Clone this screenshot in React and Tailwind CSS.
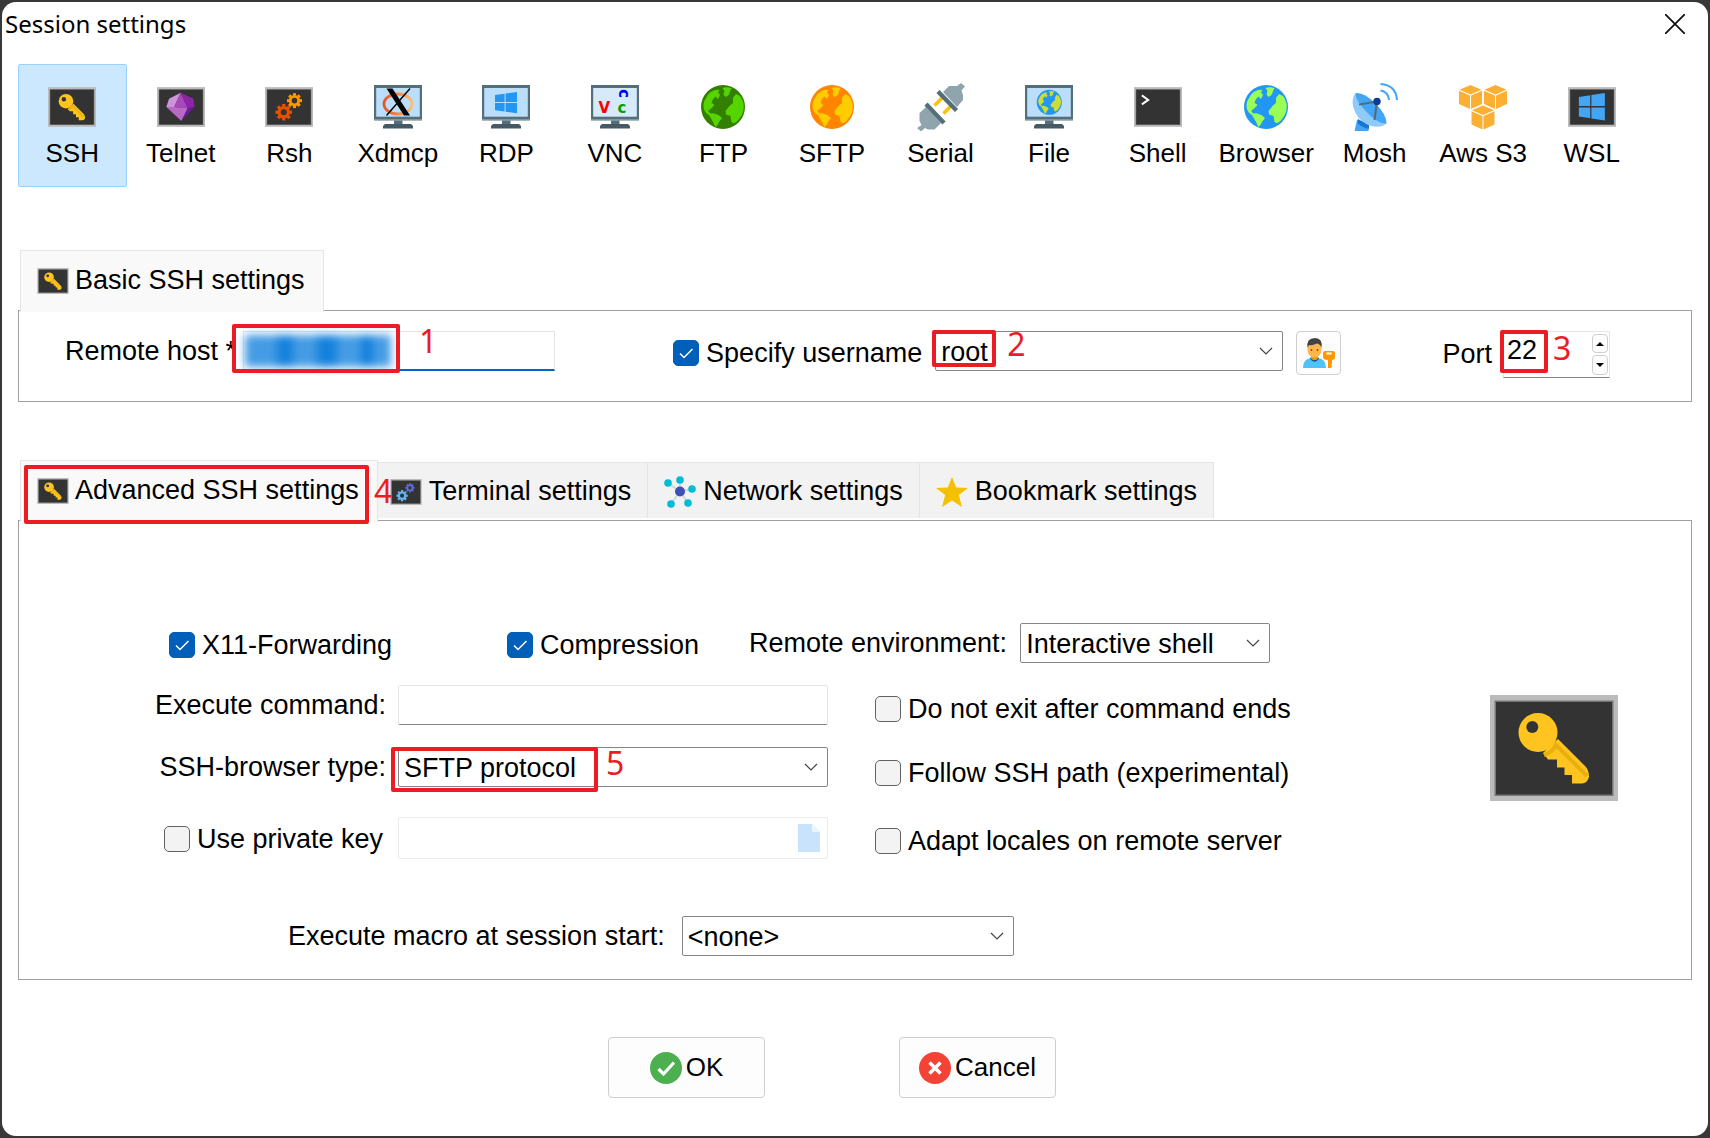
import { useState } from 'react'

function Tile({ className = 'w-12 h-10', children }) {
  return (
    <svg viewBox="0 0 128 106" className={className} aria-hidden="true">
      <rect width="128" height="106" fill="#bbbbbb" />
      <rect x="4.500" y="5.500" width="119" height="95.500" fill="#777" />
      <rect x="6" y="7" width="116" height="92.500" fill="#333" />
      {children}
    </svg>
  )
}

function KeyTile({ className }) {
  return (
    <Tile className={className}>
      <path d="M68 44L96 72Q99 76 99 82Q97 88.500 92 88.500H82V80H74.500V72.500H67V64.500H58L53 58Z" fill="#ffc41f" />
      <path d="M54 60Q63 57 66 50L97 81" fill="none" stroke="#e8b00c" strokeWidth="4" />
      <circle cx="48" cy="37.500" r="19.500" fill="#ffc41f" />
      <circle cx="42.300" cy="32" r="6" fill="#333" />
    </Tile>
  )
}

function Gear({ cx, cy, r, color }) {
  return (
    <g transform={`translate(${cx} ${cy})`} stroke={color} fill="none">
      <circle r={r * 0.56} strokeWidth={r * 0.38} />
      {[0, 45, 90, 135, 180, 225, 270, 315].map((a) => (
        <path key={a} d={`M0 ${-r * 0.66}V${-r}`} strokeWidth={r * 0.4} transform={`rotate(${a})`} />
      ))}
    </g>
  )
}

function TelnetIcon() {
  return (
    <Tile>
      <path d="M63 15L32 31L25 53L46 53Z" fill="#ce93d8" />
      <path d="M63 15L46 53L82 56Z" fill="#ab47bc" />
      <path d="M63 15L97 31L100 53L82 56Z" fill="#8e24aa" />
      <path d="M25 53H46L82 56L65 90Z" fill="#ba68c8" />
      <path d="M82 56L100 53L65 90Z" fill="#6a1b9a" />
    </Tile>
  )
}

function RshIcon() {
  return (
    <Tile>
      <Gear cx={78.6} cy={36} r={20} color="#ff9800" />
      <Gear cx={50} cy={67} r={22} color="#e65100" />
    </Tile>
  )
}

function WindowsLogo({ color, transform }) {
  return (
    <path
      transform={transform}
      fill={color}
      d="M0 2.500L9.600 1.200V9.600H0ZM10.600 1L22 -.5V9.600H10.600ZM0 10.600H9.600V19L0 17.700ZM10.600 10.600H22V20.700L10.600 19.200Z"
    />
  )
}

function Monitor({ screen = '#bbdefb', children }) {
  return (
    <svg viewBox="0 0 48 48" className="w-12 h-12" aria-hidden="true">
      <rect y="2" width="48" height="35.500" fill="#546e7a" />
      <rect y="36.500" width="48" height="1" fill="#b0bec5" />
      <rect x="2.200" y="5" width="43.600" height="28.700" fill={screen} />
      <rect x="20" y="37.500" width="8.500" height="4" fill="#546e7a" />
      <path d="M11 41H37L39 43V45.500H9V43Z" fill="#455a64" />
      {children}
    </svg>
  )
}

function XdmcpIcon() {
  return (
    <Monitor>
      <defs>
        <linearGradient id="xring">
          <stop offset="0" stopColor="#e95420" />
          <stop offset="1" stopColor="#fdbf6f" />
        </linearGradient>
      </defs>
      <ellipse cx="24" cy="21" rx="14" ry="10" fill="none" stroke="url(#xring)" strokeWidth="2.800" />
      <path d="M12.500 5.500H18.500L36 32.500H30Z" fill="#000" />
      <path d="M36 5.500L12.500 32.500" stroke="#000" strokeWidth="1.400" />
    </Monitor>
  )
}

function VncIcon() {
  return (
    <Monitor screen="#d6eafc">
      <g fontFamily="'DejaVu Sans', sans-serif" fontWeight="700" fontSize="15">
        <text x="7.500" y="30" fill="#f00">V</text>
        <text x="26.500" y="30" fill="#00a000">c</text>
        <text transform="translate(27.500 6) rotate(90)" fill="#00f">c</text>
      </g>
    </Monitor>
  )
}

function GlobeShape({ sea, land, transform }) {
  return (
    <g transform={transform}>
      <circle cx="24" cy="24" r="22" fill={sea} />
      <g fill={land}>
        <path d="M23.500 5Q28 3.500 32.500 5.300L30.700 8.700Q31 12 26.400 14L24.500 11.500L25.500 8Z" />
        <path d="M4.500 23.700Q4.500 18 7 15.300Q9 10 14.400 7.700Q17.500 6 20.500 7L19 9.300L21 12L19 16L16.500 13.500L14 16L12.500 19.700L15.500 22L12.500 25.300L9.300 27.700Q10 30 12 30.500L14.400 30.300L19.800 32.300L23 35L19.800 39.300Q19 43 16.200 44L14.700 40.300L12.500 36.300L10 32Q5.500 30 4.500 23.700Z" />
        <path d="M37 11L41 13Q45 19 44.700 23.700Q44.500 30 41.600 33.700Q39 38.500 35 40.300L32.500 39L31.500 33L27 31.500L26.500 28L30.500 23L34 20L34 15Z" />
      </g>
    </g>
  )
}

function GlobeIcon({ sea, land }) {
  return (
    <svg viewBox="0 0 48 48" className="w-12 h-12" aria-hidden="true">
      <GlobeShape sea={sea} land={land} />
    </svg>
  )
}

function SerialIcon() {
  return (
    <svg viewBox="0 0 48 48" className="w-12 h-12" aria-hidden="true">
      <path d="M25.500 14.500L17.500 22.500M33.500 23.500L26.500 30.500" stroke="#ffc107" strokeWidth="3.600" />
      <path d="M26 9L32 3H40L44 0L48 3.500L44.500 7.500L46 12V17L40 24Z" fill="#90a4ae" />
      <path d="M21 8.500L39.500 27.500" stroke="#546e7a" strokeWidth="4.400" />
      <path d="M9 24L2.500 30V38L4.500 42L0 45L4 48.500L8 45L11 46.500H17.500L24 40Z" fill="#90a4ae" />
      <path d="M9 21L27 40" stroke="#546e7a" strokeWidth="4.400" />
    </svg>
  )
}

function MoshIcon() {
  return (
    <svg viewBox="0 0 48 48" className="w-12 h-12" aria-hidden="true">
      <path d="M6 37L18 40L17.500 48H3.500Z" fill="#42a5f5" />
      <path d="M7 36L18 42V46Q10 44 6.500 40Z" fill="#1976d2" />
      <path d="M4.500 10Q0 16 2.500 25Q6 36 16 41.500Q28 46.500 35.500 40.500Z" fill="#90caf9" />
      <path d="M4.500 10Q13 9 24 20Q36 32 35.500 40.500Q27 41 15.500 29Q4 17 4.500 10Z" fill="#42a5f5" />
      <path d="M8 21.500L26 18.500L23.500 37" fill="none" stroke="#546e7a" strokeWidth="2.200" />
      <circle cx="26" cy="18.500" r="3.700" fill="#0d3c91" />
      <path d="M29.500 7.500Q37 8.500 38 17M29.500 1Q45 2 46 17" fill="none" stroke="#42a5f5" strokeWidth="2" />
    </svg>
  )
}

function AwsIcon() {
  const cubes = [[0, 2], [25, 2], [12.5, 22.5]]
  return (
    <svg viewBox="0 0 48 48" className="w-12 h-12" aria-hidden="true">
      {cubes.map(([x, y]) => (
        <g key={`${x}-${y}`} transform={`translate(${x} ${y})`} fill="#fbb034">
          <path d="M11.500 0L22.500 4.700L11.500 9.400L.5 4.700Z" />
          <path d="M0 5.800L11 10.400V24L0 19Z" />
          <path d="M23 5.800L12 10.400V24L23 19Z" />
        </g>
      ))}
    </svg>
  )
}

function UserKeyIcon() {
  return (
    <svg viewBox="0 0 32 32" className="w-8 h-8" aria-hidden="true">
      <path d="M0 31Q0 22 8 21H15Q23 22 23 31Z" fill="#4fc3f7" />
      <path d="M7 21.500Q11.500 28 16 21.500L15 20H8Z" fill="#01579b" />
      <path d="M8 17H15V21.500Q11.500 25 8 21.500Z" fill="#ff9800" />
      <ellipse cx="11.500" cy="12.500" rx="7" ry="8" fill="#ffb74d" />
      <path d="M4.500 11Q3 1 12 1Q20 1 18.500 11Q17.500 7 14 6.500Q9 9 6 8Z" fill="#424242" />
      <circle cx="8.500" cy="13" r=".9" fill="#784719" />
      <circle cx="14.500" cy="13" r=".9" fill="#784719" />
      <path d="M22 14H30Q32 14 32 16V20Q32 23 29 23V27L28 28L29 29V30L27.500 31H25V23Q20 23 20 20V16Q20 14 22 14Z" fill="#ff9800" />
      <path d="M23.500 16.500H28.500" stroke="#fff" strokeWidth="2" />
    </svg>
  )
}

function NetworkIcon() {
  return (
    <svg viewBox="0 0 32 32" className="w-8 h-8" aria-hidden="true">
      <path d="M16 15.500L4 7M16 15.500V4M16 15.500L27.500 13M16 15.500L24 27M16 15.500L7 28" stroke="#cfd8dc" strokeWidth="2" />
      <circle cx="16" cy="15.500" r="5" fill="#3f51b5" />
      <g fill="#00bcd4">
        <circle cx="4" cy="7" r="3.800" />
        <circle cx="16" cy="4" r="3.800" />
        <circle cx="28" cy="13" r="3.800" />
        <circle cx="24" cy="27" r="3.800" />
        <circle cx="7" cy="28" r="3.800" />
      </g>
    </svg>
  )
}

function StarIcon() {
  return (
    <svg viewBox="0 0 32 32" className="w-8 h-8" aria-hidden="true">
      <path d="M16 1L20.200 11.500L32 12L22.800 19L26 31L16 24.500L6 31L9.200 19L0 12L11.800 11.500Z" fill="#f4c000" />
    </svg>
  )
}

const sessions = [
  { name: 'SSH', icon: <KeyTile className="w-12 h-10" /> },
  { name: 'Telnet', icon: <TelnetIcon /> },
  { name: 'Rsh', icon: <RshIcon /> },
  { name: 'Xdmcp', icon: <XdmcpIcon /> },
  { name: 'RDP', icon: <Monitor><WindowsLogo color="#2196f3" transform="translate(13 9.500)" /></Monitor> },
  { name: 'VNC', icon: <VncIcon /> },
  { name: 'FTP', icon: <GlobeIcon sea="#338000" land="#55d400" /> },
  { name: 'SFTP', icon: <GlobeIcon sea="#ff8500" land="#ffcc00" /> },
  { name: 'Serial', icon: <SerialIcon /> },
  { name: 'File', icon: <Monitor><GlobeShape sea="#2196f3" land="#cddc39" transform="translate(10.600 5.600) scale(.57)" /></Monitor> },
  { name: 'Shell', icon: <Tile><path d="M21 22L38 34L21 46" fill="none" stroke="#fff" strokeWidth="5" /></Tile> },
  { name: 'Browser', icon: <GlobeIcon sea="#2196f3" land="#99ff55" /> },
  { name: 'Mosh', icon: <MoshIcon /> },
  { name: 'Aws S3', icon: <AwsIcon /> },
  { name: 'WSL', icon: <Tile><WindowsLogo color="#42a5f5" transform="translate(29 17.500) scale(3.150 3.450)" /></Tile> },
]

const tabs = [
  { name: 'Terminal settings', pad: 'pl-3 pr-4', icon: <Tile className="w-8 h-[26px]"><Gear cx={80} cy={36} r={19} color="#5c6fd6" /><Gear cx={48} cy={68} r={23} color="#64b5f6" /></Tile> },
  { name: 'Network settings', pad: 'px-4', icon: <NetworkIcon /> },
  { name: 'Bookmark settings', pad: 'px-4', icon: <StarIcon /> },
]

// red frame and step number laid over a field
function Step({ n, box, num }) {
  return (
    <>
      <span className={`absolute z-10 border-4 border-[#ed1c24] rounded-xs pointer-events-none ${box}`} />
      <span className={`absolute z-10 font-['Noto_Sans',sans-serif] text-[32px] leading-8 text-[#ed1c24] pointer-events-none ${num}`}>{n}</span>
    </>
  )
}

function Check({ label, checked = false }) {
  return (
    <label className="flex items-center gap-[7px] h-11 whitespace-nowrap">
      <span className="relative w-[26px] h-[26px] shrink-0">
        <input
          type="checkbox"
          defaultChecked={checked}
          className="peer block w-full h-full appearance-none rounded-[5px] border border-[#626262] bg-[#f3f3f3] checked:bg-[#005fb8] checked:border-[#005fb8]"
        />
        <svg viewBox="0 0 26 26" className="absolute inset-0 hidden peer-checked:block pointer-events-none" aria-hidden="true">
          <path d="M7 13.500L11 17.500L19.500 9" fill="none" stroke="#fff" strokeWidth="1.500" />
        </svg>
      </span>
      {label}
    </label>
  )
}

function Select({ id, label, options, className, children }) {
  return (
    <div className={`relative h-10 ${className}`}>
      <select id={id} aria-label={label} className="block w-full h-full pl-[5px] pr-8 pb-0.5 appearance-none bg-white border border-[#868686] rounded-xs">
        {options.map((o) => (
          <option key={o}>{o}</option>
        ))}
      </select>
      <svg viewBox="0 0 14 8" className="absolute right-2.5 top-4 w-3.5 h-2 pointer-events-none" aria-hidden="true">
        <path d="M1 1L7 7L13 1" fill="none" stroke="#444" strokeWidth="1.200" />
      </svg>
      {children}
    </div>
  )
}

export default function App() {
  const [session, setSession] = useState('SSH')
  const [port, setPort] = useState(22)

  return (
    <div className="min-h-screen flex flex-col bg-[#383838] p-0.5">
      <div className="grow bg-white rounded-[14px] pb-9 font-['Liberation_Sans',Arial,sans-serif] text-[27px] text-black">
        <header className="flex items-start justify-between h-[62px] pl-[3px] pr-[21px]">
          <h1 className="font-['Noto_Sans',sans-serif] text-2xl leading-[44px]">Session settings</h1>
          <button aria-label="Close" className="mt-2.5 p-0.5">
            <svg viewBox="0 0 20 20" className="w-5 h-5" aria-hidden="true">
              <path d="M0 0L20 20M20 0L0 20" stroke="#111" strokeWidth="1.800" />
            </svg>
          </button>
        </header>

        <nav className="grid grid-cols-15 pl-4 pr-[62px] text-[26px]">
          {sessions.map((s) => (
            <button
              key={s.name}
              onClick={() => setSession(s.name)}
              className={`flex flex-col items-center h-[123px] pt-[18px] border rounded-xs whitespace-nowrap ${
                session === s.name ? 'bg-[#cce8ff] border-[#99d1ff]' : 'border-transparent'
              }`}
            >
              <span className="flex items-center h-12">{s.icon}</span>
              <span className="mt-1.5 leading-8">{s.name}</span>
            </button>
          ))}
        </nav>

        <main className="px-4">
          <section className="mt-[63px]">
            <div role="tablist" className="flex h-[60px] pl-0.5">
              <button role="tab" aria-selected="true" className="relative flex items-center gap-1.5 h-[62px] pl-4 pr-[18px] pb-0.5 bg-[#f9f9f9] border border-b-0 border-[#e5e5e5]">
                <KeyTile className="w-8 h-[26px]" />
                Basic SSH settings
              </button>
            </div>
            <div className="flex items-start h-[92px] pt-5 pl-[46px] pr-[81px] border border-[#a0a0a0] whitespace-nowrap">
              <label htmlFor="host" className="leading-10">Remote host *</label>
              <div className="relative w-[312px] h-10 ml-[7px]">
                <input id="host" className="block w-full h-full px-2 bg-white border border-[#e5e5e5] border-b-2 border-b-[#0067c0] outline-none" />
                <span className="absolute left-0.5 top-1 flex w-[146px] h-8 bg-[#459ce4] blur-[4px]">
                  <span className="w-4 ml-8 bg-[#1581dc]" />
                  <span className="w-5 ml-6 bg-[#1581dc]" />
                  <span className="w-3 ml-6 bg-[#1581dc]" />
                </span>
                <Step n="1" box="-left-[11px] -top-[7px] w-[168px] h-[49px]" num="left-[176px] -top-1.5" />
              </div>
              <div className="ml-[118px]">
                <Check label="Specify username" checked />
              </div>
              <Select label="Username" options={['root', '<default>']} className="grow ml-[13px]">
                <Step n="2" box="-left-[3px] -top-px w-16 h-[37px]" num="left-[72px] -top-[3px]" />
              </Select>
              <button aria-label="Manage users" className="flex items-center justify-center w-[45px] h-11 ml-[13px] bg-[#fdfdfd] border border-[#cfcfcf] rounded-sm">
                <UserKeyIcon />
              </button>
              <label htmlFor="port" className="ml-[101px] leading-[46px]">Port</label>
              <div className="relative w-[107px] h-[47px] ml-[11px]">
                <input
                  id="port"
                  inputMode="numeric"
                  value={port}
                  onChange={(e) => setPort(Number(e.target.value) || 0)}
                  className="block w-full h-full pl-[3px] pb-2 border border-[#e5e5e5] border-b-[#868686] outline-none"
                />
                <div className="absolute right-0.5 top-[3px] flex flex-col gap-0.5">
                  <button aria-label="Increase port" onClick={() => setPort(port + 1)} className="flex items-center justify-center w-4 h-[19px] bg-[#fdfdfd] border border-[#cfcfcf] rounded-sm">
                    <svg viewBox="0 0 8 4" className="w-2 h-1"><path d="M0 4L4 0L8 4Z" /></svg>
                  </button>
                  <button aria-label="Decrease port" onClick={() => setPort(port - 1)} className="flex items-center justify-center w-4 h-5 bg-[#fdfdfd] border border-[#cfcfcf] rounded-sm">
                    <svg viewBox="0 0 8 4" className="w-2 h-1"><path d="M0 0L4 4L8 0Z" /></svg>
                  </button>
                </div>
                <Step n="3" box="-left-[3px] -top-px w-12 h-[43px]" num="left-[50px] top-px" />
              </div>
            </div>
          </section>

          <section className="mt-[58px]">
            <div role="tablist" className="flex h-[60px] pl-0.5 whitespace-nowrap">
              <button role="tab" aria-selected="true" className="relative flex items-center gap-1.5 h-[62px] pl-4 pr-[18px] pb-0.5 bg-[#f9f9f9] border border-b-0 border-[#e5e5e5]">
                <KeyTile className="w-8 h-[26px]" />
                Advanced SSH settings
                <Step n="4" box="left-[3px] top-1 w-[345px] h-[59px]" num="left-[353px] top-3.5" />
              </button>
              {tabs.map((t) => (
                <button key={t.name} role="tab" aria-selected="false" className={`flex items-center gap-[7px] h-14 mt-0.5 pt-0.5 bg-[#f2f2f2] border-t border-r border-[#e5e5e5] ${t.pad}`}>
                  {t.icon}
                  {t.name}
                </button>
              ))}
            </div>

            <div className="h-[460px] pt-[102px] pl-[137px] pr-[73px] border border-[#a0a0a0] whitespace-nowrap">
              <div className="flex items-start pl-[13px]">
                <div className="w-[338px]"><Check label="X11-Forwarding" checked /></div>
                <div className="w-[242px]"><Check label="Compression" checked /></div>
                <label htmlFor="env" className="mr-[13px] leading-10">Remote environment:</label>
                <Select id="env" options={['Interactive shell', 'Bash shell', 'LXDE desktop']} className="w-[250px]" />
              </div>

              <div className="grid grid-cols-[230px_430px_1fr_128px] mt-[18px]">
                <div className="flex flex-col items-end">
                  <label htmlFor="cmd" className="leading-10">Execute command:</label>
                  <label htmlFor="browser" className="mt-[22px] leading-10">SSH-browser type:</label>
                  <div className="mt-[30px] mr-[3px]"><Check label="Use private key" /></div>
                </div>
                <div className="flex flex-col ml-3 -mr-3">
                  <input id="cmd" className="h-10 px-1 border border-[#e5e5e5] border-b-[#868686] rounded-xs outline-none" />
                  <Select id="browser" options={['SFTP protocol', 'SCP (normal speed)', 'None']} className="mt-[22px]">
                    <Step n="5" box="-left-[7px] top-0 w-[207px] h-[45px]" num="left-[208px] top-0" />
                  </Select>
                  <div className="relative mt-[30px]">
                    <input aria-label="Private key file" disabled className="block w-full h-[42px] px-1 border border-[#ebebeb] rounded-xs" />
                    <svg viewBox="0 0 22 28" className="absolute right-2 top-[7px] w-[22px] h-7" aria-hidden="true">
                      <path d="M0 0H14L22 8V28H0Z" fill="#c8e3fb" />
                      <path d="M14 0L22 8H14Z" fill="#e9f4fe" />
                    </svg>
                  </div>
                </div>
                <div className="flex flex-col mt-0.5 pl-[59px]">
                  <Check label="Do not exit after command ends" />
                  <div className="mt-5"><Check label="Follow SSH path (experimental)" /></div>
                  <div className="mt-6"><Check label="Adapt locales on remote server" /></div>
                </div>
                <KeyTile className="mt-2.5 w-32 h-[106px]" />
              </div>

              <div className="flex mt-[53px] pl-[132px]">
                <label htmlFor="macro" className="mr-[17px] leading-10">Execute macro at session start:</label>
                <Select id="macro" options={['<none>']} className="w-[332px]" />
              </div>
            </div>
          </section>
        </main>

        <footer className="flex justify-center gap-[134px] mt-[57px] pr-[46px] text-[26px]">
          <button className="flex items-center justify-center gap-1 w-[157px] h-[61px] bg-[#fdfdfd] border border-[#cfcfcf] rounded-sm">
            <svg viewBox="0 0 32 32" className="w-8 h-8" aria-hidden="true">
              <circle cx="16" cy="16" r="16" fill="#4caf50" />
              <path d="M8.500 17L13.500 22L24 10.500" fill="none" stroke="#fff" strokeWidth="3.200" />
            </svg>
            OK
          </button>
          <button className="flex items-center justify-center gap-1 w-[157px] h-[61px] bg-[#fdfdfd] border border-[#cfcfcf] rounded-sm">
            <svg viewBox="0 0 32 32" className="w-8 h-8" aria-hidden="true">
              <circle cx="16" cy="16" r="16" fill="#f44336" />
              <path d="M10.500 10.500L21.500 21.500M21.500 10.500L10.500 21.500" stroke="#fff" strokeWidth="3.600" />
            </svg>
            Cancel
          </button>
        </footer>
      </div>
    </div>
  )
}
